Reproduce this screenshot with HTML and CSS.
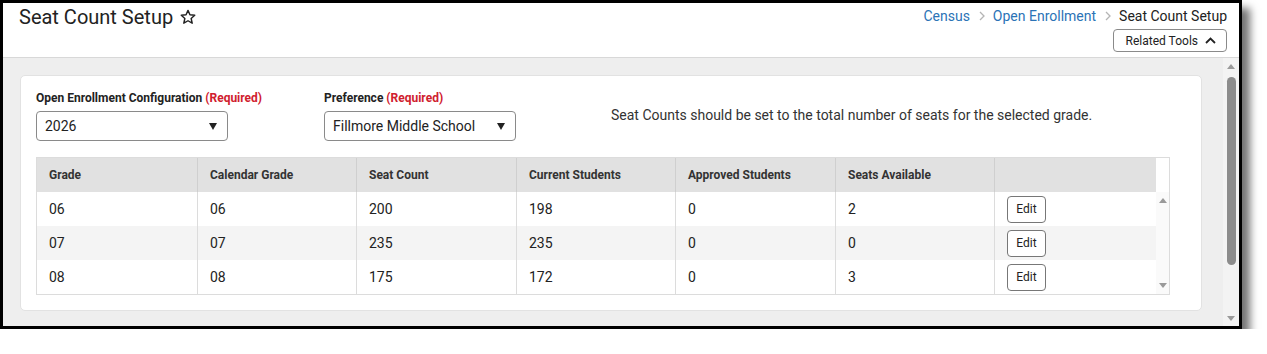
FILE: index.html
```html
<!DOCTYPE html>
<html lang="en">
<head>
    <meta charset="UTF-8">
    <meta name="viewport" content="width=device-width, initial-scale=1.0">
    <title>Seat Count Setup</title>
    <link rel="stylesheet" href="styles.css">
</head>
<body>

<div class="frame">

    <!-- Page header -->
    <header class="topbar">
        <h1 class="page-title">Seat Count Setup
            <svg class="star" width="18" height="18" viewBox="0 0 24 24"><path d="M12 3.2l2.6 5.9 6.4.6-4.8 4.3 1.4 6.3L12 17l-5.6 3.3 1.4-6.3L3 9.7l6.4-.6z" fill="none" stroke="#222" stroke-width="1.9" stroke-linejoin="round"/></svg>
        </h1>
        <div class="top-right">
            <nav class="crumbs">
                <a href="#">Census</a>
                <svg class="sep" width="6" height="10" viewBox="0 0 6 10"><path d="M1 1l4 4-4 4" fill="none" stroke="#b5b5b5" stroke-width="1.3"/></svg>
                <a href="#">Open Enrollment</a>
                <svg class="sep" width="6" height="10" viewBox="0 0 6 10"><path d="M1 1l4 4-4 4" fill="none" stroke="#b5b5b5" stroke-width="1.3"/></svg>
                <span>Seat Count Setup</span>
            </nav>
            <button class="btn-tools">Related Tools
                <svg width="11" height="7" viewBox="0 0 11 7"><path d="M1 6l4.5-4.5L10 6" fill="none" stroke="#222" stroke-width="1.8"/></svg>
            </button>
        </div>
    </header>

    <div class="main">
        <div class="content">
            <section class="card">

                <!-- Filters -->
                <div class="filters">
                    <div class="field">
                        <label>Open Enrollment Configuration <span class="req">(Required)</span></label>
                        <div class="select"><span>2026</span><span class="caret"></span></div>
                    </div>
                    <div class="field">
                        <label>Preference <span class="req">(Required)</span></label>
                        <div class="select"><span>Fillmore Middle School</span><span class="caret"></span></div>
                    </div>
                    <p class="hint">Seat Counts should be set to the total number of seats for the selected grade.</p>
                </div>

                <!-- Seat count grid -->
                <div class="grid">
                    <div class="grid-main">
                        <div class="row head">
                            <div class="cell">Grade</div>
                            <div class="cell">Calendar Grade</div>
                            <div class="cell">Seat Count</div>
                            <div class="cell">Current Students</div>
                            <div class="cell">Approved Students</div>
                            <div class="cell">Seats Available</div>
                            <div class="cell"></div>
                        </div>
                        <div id="grid-rows"></div>
                    </div>
                    <div class="grid-scroll">
                        <div class="gs-head"></div>
                        <div class="gs-track">
                            <span class="arrow up"></span>
                            <span class="arrow down"></span>
                        </div>
                    </div>
                </div>

            </section>
        </div>

        <!-- Page scrollbar -->
        <div class="page-scroll">
            <span class="arrow up"></span>
            <span class="thumb"></span>
            <span class="arrow down"></span>
        </div>
    </div>
</div>

<script>
const seatCounts = [
    { grade: "06", calendar: "06", seats: 200, current: 198, approved: 0, available: 2 },
    { grade: "07", calendar: "07", seats: 235, current: 235, approved: 0, available: 0 },
    { grade: "08", calendar: "08", seats: 175, current: 172, approved: 0, available: 3 }
];

const rows = document.getElementById('grid-rows');
seatCounts.forEach((s) => {
    const row = document.createElement('div');
    row.classList.add('row');
    row.innerHTML = `
        <div class="cell">${s.grade}</div>
        <div class="cell">${s.calendar}</div>
        <div class="cell">${s.seats}</div>
        <div class="cell">${s.current}</div>
        <div class="cell">${s.approved}</div>
        <div class="cell">${s.available}</div>
        <div class="cell"><button class="btn-edit">Edit</button></div>
    `;
    rows.appendChild(row);
});
</script>

</body>
</html>
```

FILE: styles.css
```css
:root {
    --text: #222;
    --link: #2b73b6;
    --required: #d0202e;
    --line: #dcdcdc;
    --page-bg: #eeeeee;
    --head-bg: #e1e1e1;
    --alt-bg: #f4f4f4;
}

body {
    margin: 0;
    background: white;
    font-family: Roboto, 'Liberation Sans', Arial, sans-serif;
    color: var(--text);
}

.frame {
    width: 1236px;
    height: 323px;
    border: 3px solid #000;
    background: white;
    display: flex;
    flex-direction: column;
    box-shadow: 8px 8px 8px rgba(0, 0, 0, 0.55);
}

/* header */
.topbar {
    height: 54px;
    border-bottom: 1px solid #d8d8d8;
    display: flex;
    align-items: flex-start;
    justify-content: space-between;
    padding: 0 12px 0 16px;
}

.page-title {
    margin: 0;
    font-size: 20px;
    font-weight: 400;
    line-height: 28px;
    display: flex;
    align-items: center;
}

.star {
    margin-left: 6px;
    margin-top: -1px;
}

.top-right {
    display: flex;
    flex-direction: column;
    align-items: flex-end;
    padding-top: 3px;
}

.crumbs {
    display: flex;
    align-items: center;
    font-size: 14px;
    line-height: 20px;
}

.crumbs a {
    color: var(--link);
    text-decoration: none;
}

.crumbs .sep {
    margin: 0 8px 0 9px;
}

.btn-tools {
    margin-top: 3px;
    height: 23px;
    padding: 0 10px 0 12px;
    border: 1px solid #8a8a8a;
    border-radius: 4px;
    background: white;
    font-family: inherit;
    font-size: 12px;
    color: var(--text);
    display: flex;
    align-items: center;
    gap: 7px;
}

/* main area */
.main {
    flex: 1;
    display: flex;
    background: var(--page-bg);
}

.content {
    flex: 1;
    padding: 17px 21px 0 17px;
}

.card {
    background: white;
    border: 1px solid #e2e2e2;
    border-radius: 5px;
    padding: 14px 15px 15px 15px;
}

.filters {
    display: flex;
    align-items: flex-start;
}

.field {
    width: 192px;
    margin-right: 96px;
}

.field label {
    display: block;
    white-space: nowrap;
    font-size: 12px;
    font-weight: 700;
    line-height: 16px;
    margin-bottom: 5px;
}

.req {
    color: var(--required);
}

.select {
    height: 28px;
    border: 1px solid #8a8a8a;
    border-radius: 4px;
    display: flex;
    align-items: center;
    justify-content: space-between;
    padding: 0 10px 0 8px;
    font-size: 14px;
}

.caret {
    width: 0;
    height: 0;
    border-left: 4.5px solid transparent;
    border-right: 4.5px solid transparent;
    border-top: 7px solid #222;
}

.hint {
    margin: 15px 0 0 -1px;
    font-size: 14px;
    line-height: 20px;
    color: #333;
}

/* grid */
.grid {
    margin-top: 16px;
    width: 1132px;
    border: 1px solid var(--line);
    display: flex;
}

.grid-main {
    width: 1119px;
}

.row {
    display: grid;
    grid-template-columns: 160px 159px 160px 159px 160px 159px 162px;
    height: 34px;
}

.row:nth-child(2) {
    background: var(--alt-bg);
}

.row.head {
    background: var(--head-bg);
    font-size: 12px;
    font-weight: 700;
    color: #333;
}

.cell {
    display: flex;
    align-items: center;
    padding-left: 12px;
    border-left: 1px solid var(--line);
    font-size: 14px;
}

.row.head .cell {
    font-size: 12px;
    border-left-color: #cfcfcf;
}

.cell:first-child {
    border-left: none;
    padding-left: 12px;
}

.btn-edit {
    width: 39px;
    height: 27px;
    padding: 0;
    border: 1px solid #777;
    border-radius: 4px;
    background: white;
    font-family: inherit;
    font-size: 12px;
    color: var(--text);
}

.grid-scroll {
    flex: 1;
    display: flex;
    flex-direction: column;
}

.gs-head {
    height: 34px;
    background: white;
}

.gs-track {
    flex: 1;
    background: #fafafa;
    display: flex;
    flex-direction: column;
    justify-content: space-between;
    align-items: center;
    padding: 6px 0 6px;
}

.arrow {
    width: 0;
    height: 0;
    border-left: 4.5px solid transparent;
    border-right: 4.5px solid transparent;
}

.arrow.up {
    border-bottom: 5px solid #9a9a9a;
}

.arrow.down {
    border-top: 5px solid #9a9a9a;
}

/* page scrollbar */
.page-scroll {
    width: 16px;
    background: #f3f3f3;
    display: flex;
    flex-direction: column;
    align-items: center;
    padding: 6px 0 5px;
}

.thumb {
    width: 9px;
    height: 188px;
    margin: 8px 0 0 1px;
    background: #8c8c8c;
    border-radius: 5px;
}

.page-scroll .arrow.down {
    margin-top: auto;
}
```
